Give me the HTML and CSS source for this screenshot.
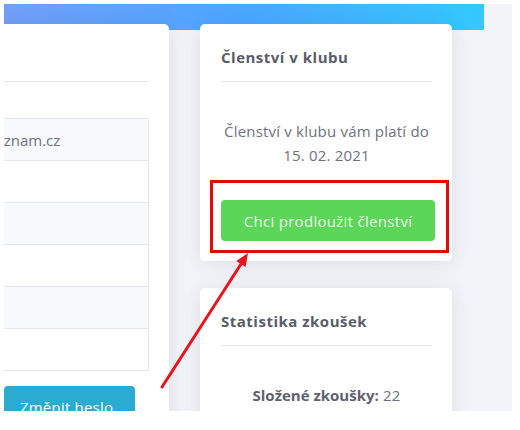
FILE: index.html
```html
<!DOCTYPE html>
<html lang="cs">
<head>
<meta charset="utf-8">
<title>Profil</title>
<link rel="stylesheet" href="styles.css">
</head>
<body>
<div class="frame">
  <div class="topbar"></div>
  <div class="cards">
    <section class="card card-profile">
      <header class="card-head"><h2>Můj profil</h2></header>
      <div class="card-body">
        <table class="info">
          <colgroup><col class="col-label"><col></colgroup>
          <tr><td>E-mail</td><td>jan.novak@seznam.cz</td></tr>
          <tr><td>Jméno</td><td>Jan</td></tr>
          <tr><td>Příjmení</td><td>Novák</td></tr>
          <tr><td>Telefon</td><td>—</td></tr>
          <tr><td>Město</td><td>Praha</td></tr>
          <tr><td>Klub</td><td>Ano</td></tr>
        </table>
        <div class="actions">
          <span></span>
          <button class="btn btn-info">Změnit heslo</button>
        </div>
      </div>
    </section>
    <div class="side">
      <section class="card">
        <header class="card-head"><h2>Členství v klubu</h2></header>
        <div class="card-body">
          <p class="note">Členství v klubu vám platí do<br>15. 02. 2021</p>
          <div class="cta">
            <button class="btn btn-success">Chci prodloužit členství</button>
            <span class="highlight"></span>
          </div>
        </div>
      </section>
      <section class="card">
        <header class="card-head"><h2>Statistika zkoušek</h2></header>
        <div class="card-body">
          <p class="note"><strong>Složené zkoušky:</strong> 22</p>
        </div>
      </section>
    </div>
  </div>
  <svg class="arrow" width="508" height="407" viewBox="0 0 508 407">
    <line x1="158" y1="383" x2="237" y2="260" stroke="#e8141c" stroke-width="3" stroke-linecap="round"/>
    <polygon points="244,249 241.6,262.9 232.3,257" fill="#e8141c"/>
  </svg>
</div>
</body>
</html>
```

FILE: styles.css
```css
body {
  margin: 0;
  background: #ffffff;
  font-family: "Open Sans", "Noto Sans", sans-serif;
}

.frame {
  position: relative;
  margin: 4px 0 0 4px;
  width: 508px;
  height: 407px;
  overflow: hidden;
  background: #f3f4f9;
}

.topbar {
  width: 480px;
  height: 26px;
  background: linear-gradient(90deg, #729ffa 0%, #4ba7ff 50%, #33c9ff 100%);
}

.cards {
  display: flex;
  align-items: flex-start;
  gap: 31px;
  margin-top: -6px;
  margin-left: -200px;
}

.card {
  background: #ffffff;
  border-radius: 5px;
  box-shadow: 0 2px 20px rgba(58, 59, 69, 0.12);
  box-sizing: border-box;
}

.card-profile {
  width: 365px;
  flex: none;
  padding: 0 20px 20px 21px;
}

.side {
  width: 252px;
  flex: none;
  display: flex;
  flex-direction: column;
  gap: 27px;
}

.side .card {
  padding: 0 20px 20px 21px;
}

.card-head {
  padding: 21px 0 12px;
  border-bottom: 1px solid #e3e6f0;
}

.card-head h2 {
  margin: 0;
  font-size: 15px;
  line-height: 24px;
  font-weight: 700;
  color: #5a5c69;
  letter-spacing: 0.5px;
}

.note {
  margin: 37px 0 0;
  font-size: 15px;
  line-height: 24px;
  color: #6e707e;
  text-align: center;
  letter-spacing: 0.2px;
}

.note strong {
  font-weight: 700;
  color: #5f616e;
  letter-spacing: 0;
}

.cta {
  position: relative;
  margin: 33px -3px 0 0;
}

.btn {
  border: 0;
  border-radius: 4px;
  font-family: "Open Sans", "Noto Sans", sans-serif;
  font-size: 15px;
  cursor: pointer;
}

.btn-success {
  display: block;
  width: 100%;
  height: 41px;
  background: #5cd659;
  color: rgba(255, 255, 255, 0.92);
  letter-spacing: 0.3px;
}

.highlight {
  position: absolute;
  left: -11px;
  right: -14px;
  top: -20px;
  bottom: -12px;
  border: 3px solid #e10b0b;
}

.info {
  width: 100%;
  margin-top: 36px;
  border-collapse: collapse;
  table-layout: fixed;
  border: 1px solid #e3e6f0;
}

.col-label {
  width: 70px;
}

.info td {
  height: 41px;
  padding: 0 12px;
  border-top: 1px solid #e3e6f0;
  font-size: 15px;
  color: #6e707e;
  white-space: nowrap;
}

.info tr:nth-child(odd) td {
  background: #f8f9fc;
}

.actions {
  display: grid;
  grid-template-columns: 179px auto;
  justify-content: start;
  margin-top: 15px;
}

.btn-info {
  height: 41px;
  padding: 0 22px 0 16px;
  background: #2aacd0;
  color: #ffffff;
  letter-spacing: 0.2px;
}

.arrow {
  position: absolute;
  left: 0;
  top: 0;
  pointer-events: none;
}
```
